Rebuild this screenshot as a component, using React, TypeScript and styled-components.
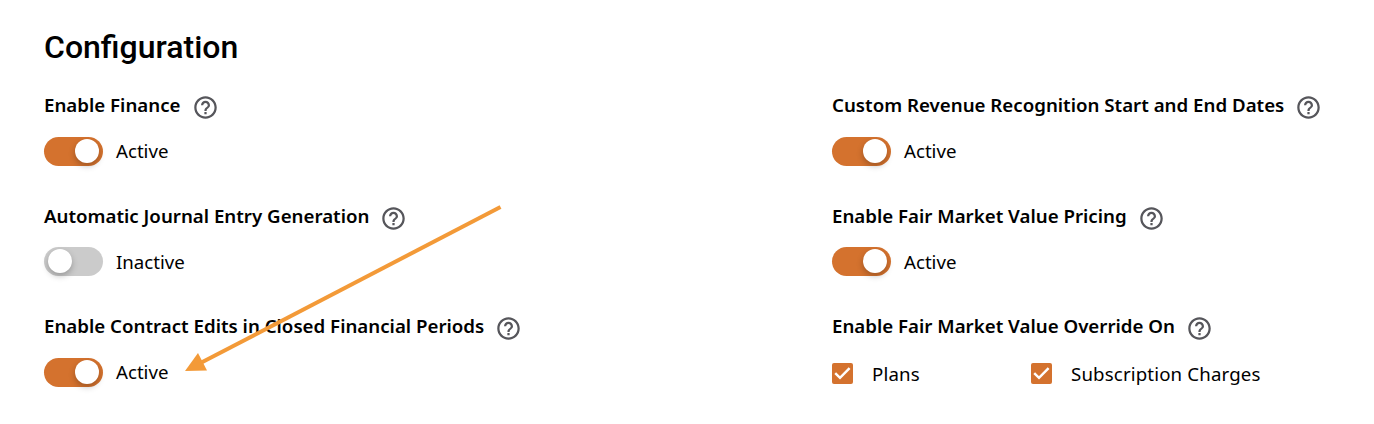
import React from "react";
import styled, { createGlobalStyle } from "styled-components";
import { MdHelpOutline } from "react-icons/md";

const GlobalStyle = createGlobalStyle`
  * { box-sizing: border-box; }
  body { margin: 0; background: #fff; color: #000; font-family: "Noto Sans", sans-serif; }
`;

const Page = styled.main`
  position: relative;
  height: 424px;
  padding: 24px 44px 0;
  overflow: hidden;
`;

const Title = styled.h1`
  margin: 0;
  height: 46px;
  font: 500 32px/46px Roboto, sans-serif;
`;

const Columns = styled.div`
  display: grid;
  grid-template-columns: 788px 1fr;
  padding-top: 20.2px;
`;

const Column = styled.div`
  display: flex;
  flex-direction: column;
`;

const Setting = styled.section`
  height: 110.4px;
`;

const Heading = styled.div`
  display: flex;
  align-items: flex-start;
  gap: 11px;
  height: 46.8px;
`;

const Label = styled.h2`
  margin: 0;
  font-size: 18.7px;
  font-weight: 600;
  line-height: 30px;
  white-space: nowrap;
`;

const HelpIcon = styled(MdHelpOutline)`
  flex: none;
  width: 27px;
  height: 27px;
  margin-top: 4px;
  color: #56565b;
`;

const ToggleRow = styled.div`
  display: flex;
  align-items: center;
  gap: 13px;
  height: 29px;
`;

const Track = styled.button<{ $on: boolean }>`
  display: flex;
  justify-content: ${(p) => (p.$on ? "flex-end" : "flex-start")};
  align-items: center;
  width: 59px;
  height: 29px;
  padding: 0 4px 1px;
  border: 0;
  border-radius: 15px;
  background: ${(p) => (p.$on ? "#d4722e" : "#cbcbcb")};
`;

const Knob = styled.span`
  width: 24px;
  height: 24px;
  border-radius: 50%;
  background: #fff;
  box-shadow: 0 3px 6px rgba(0, 0, 0, 0.25);
`;

const Value = styled.span`
  padding-bottom: 1.2px;
  font-size: 18.67px;
  line-height: 27px;
  white-space: nowrap;
`;

const ChoiceText = styled(Value)`
  padding: 1px 0 0;
  letter-spacing: 0.15px;
`;

const Choices = styled.div`
  display: grid;
  grid-template-columns: 199px auto;
  height: 31px;
`;

const Choice = styled.label`
  display: flex;
  align-items: center;
  gap: 19px;
`;

const Box = styled.span`
  display: flex;
  width: 21px;
  height: 21px;
  border-radius: 2px;
  background: #d4722e;
`;

const Arrow = styled.svg`
  position: absolute;
  left: 180px;
  top: 200px;
  pointer-events: none;
`;

function SettingHeading({ text }: { text: string }) {
  return (
    <Heading>
      <Label>{text}</Label>
      <HelpIcon />
    </Heading>
  );
}

function ToggleSetting({ label, on = true }: { label: string; on?: boolean }) {
  return (
    <Setting>
      <SettingHeading text={label} />
      <ToggleRow>
        <Track $on={on} role="switch" aria-checked={on} aria-label={label}>
          <Knob />
        </Track>
        <Value>{on ? "Active" : "Inactive"}</Value>
      </ToggleRow>
    </Setting>
  );
}

function CheckChoice({ label }: { label: string }) {
  return (
    <Choice>
      <Box>
        <svg width="21" height="21" viewBox="0 0 21 21" fill="none">
          <path d="M3.2 10.2 L8 14.8 L17.6 5.2" stroke="#fff" strokeWidth="2.5" />
        </svg>
      </Box>
      <ChoiceText>{label}</ChoiceText>
    </Choice>
  );
}

export default function App() {
  return (
    <Page>
      <GlobalStyle />
      <Title>Configuration</Title>
      <Columns>
        <Column>
          <ToggleSetting label="Enable Finance" />
          <ToggleSetting label="Automatic Journal Entry Generation" on={false} />
          <ToggleSetting label="Enable Contract Edits in Closed Financial Periods" />
        </Column>
        <Column>
          <ToggleSetting label="Custom Revenue Recognition Start and End Dates" />
          <ToggleSetting label="Enable Fair Market Value Pricing" />
          <Setting>
            <SettingHeading text="Enable Fair Market Value Override On" />
            <Choices>
              <CheckChoice label="Plans" />
              <CheckChoice label="Subscription Charges" />
            </Choices>
          </Setting>
        </Column>
      </Columns>
      <Arrow width="330" height="180" viewBox="180 200 330 180">
        <line x1="500.5" y1="207" x2="200" y2="363.3" stroke="#f39a38" strokeWidth="4" />
        <path d="M185 371 L198 353 L207 370.5 Z" fill="#f39a38" />
      </Arrow>
    </Page>
  );
}
